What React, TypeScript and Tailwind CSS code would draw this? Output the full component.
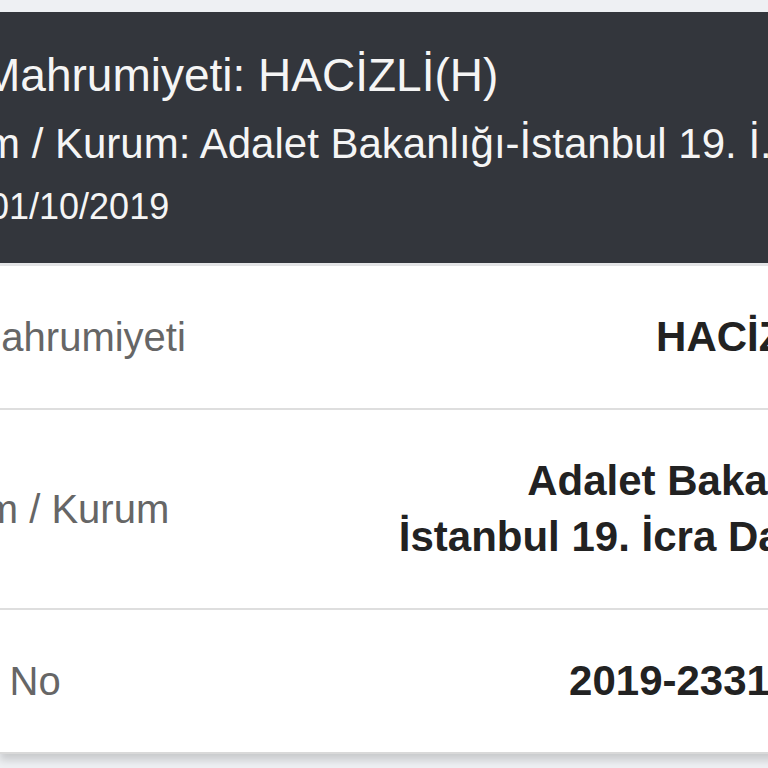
import React from 'react';

const font = { fontFamily: '"Liberation Sans", Arial, sans-serif' };

interface Row {
  label: string;
  labelShift: string;
  valuePad: string;
  lines: string[];
}

const rows: Row[] = [
  { label: 'Mahrumiyeti', labelShift: '-ml-[32px]', valuePad: 'pr-[0px]', lines: ['HACİZLİ(H)'] },
  {
    label: 'Birim / Kurum',
    labelShift: '-ml-[73px]',
    valuePad: 'pr-[12px]',
    lines: ['Adalet Bakanlığı-', 'İstanbul 19. İcra Dairesi'],
  },
  { label: 'Dosya No', labelShift: '-ml-[115px]', valuePad: 'pr-[12px]', lines: ['2019-233185 E.'] },
];

/** Haciz kaydı detayı — koyu özet + satır satır alanlar */
export default function App() {
  return (
    <div className="w-[768px] h-[768px] overflow-hidden bg-[#eef0f3] pt-[12px]" style={font}>
      <div className="w-[880px]">
        <div className="bg-[#33363c] text-[#f5f5f5] pt-[36px] pb-[35px] border-b-[3px] border-[#e4e5e7]">
          <div className="flex flex-col gap-[17px] whitespace-nowrap">
            <div className="text-[46px] leading-[55px] -ml-[18px]">Mahrumiyeti: HACİZLİ(H)</div>
            <div className="text-[42px] leading-[48px] -ml-[15px]">m / Kurum: Adalet Bakanlığı-İstanbul 19. İ...</div>
            <div className="text-[36px] leading-[43px] -ml-[11px]">01/10/2019</div>
          </div>
        </div>

        <ul className="bg-white divide-y-2 divide-[#dedede] border-b-2 border-[#d9d9d9] shadow-[0_6px_8px_rgba(0,0,0,0.16)]">
          {rows.map((row) => (
            <li key={row.label} className={`flex justify-between items-center py-[43px] ${row.valuePad}`}>
              <span className={`text-[40px] leading-[56px] text-[#666666] whitespace-nowrap ${row.labelShift}`}>
                {row.label}
              </span>
              <div className="text-right text-[42px] leading-[56px] font-bold text-[#222222] whitespace-nowrap">
                {row.lines.map((line) => (
                  <div key={line}>{line}</div>
                ))}
              </div>
            </li>
          ))}
        </ul>
      </div>
    </div>
  );
}
